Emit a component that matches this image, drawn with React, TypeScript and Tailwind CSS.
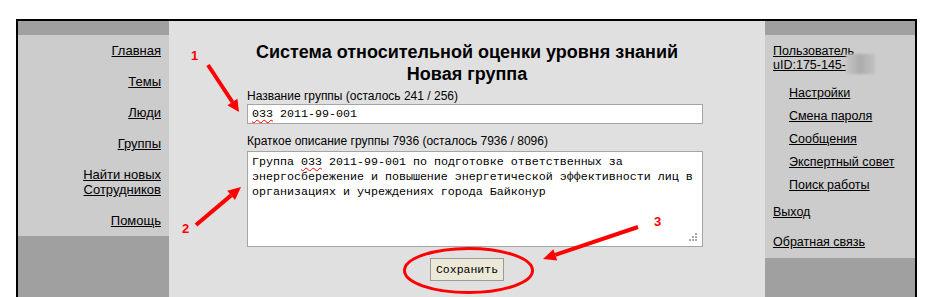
import React from "react";

const sans = { fontFamily: '"Liberation Sans", Arial, sans-serif' };
const mono = { fontFamily: '"Liberation Mono", "Courier New", monospace' };

function Wavy({ children }: { children: React.ReactNode }) {
  return (
    <span className="underline decoration-wavy decoration-[#ff0000] decoration-1 underline-offset-[2px]">
      {children}
    </span>
  );
}

export default function App() {
  const leftLinks: string[][] = [
    ["Главная"],
    ["Темы"],
    ["Люди"],
    ["Группы"],
    ["Найти новых", "Сотрудников"],
    ["Помощь"],
  ];
  const subLinks = ["Настройки", "Смена пароля", "Сообщения", "Экспертный совет", "Поиск работы"];

  return (
    <div className="relative w-[931px] h-[297px] overflow-hidden bg-white pl-[16px] pt-[19px] text-black" style={sans}>
      <div className="flex w-[901px] h-[278px] border-2 border-b-0 border-black">
        {/* left sidebar */}
        <div className="flex w-[151px] flex-col">
          <div className="h-[14px] bg-[#a0a0a0]" />
          <div className="h-[201px] bg-[#cccccc] pr-[8px] pt-[8px] text-right text-[13px]">
            {leftLinks.map((l) => (
              <div key={l[0]} className="mb-[16px] leading-[15px]">
                <a className="underline underline-offset-[1px] cursor-pointer">
                  {l.map((t, i) => (
                    <React.Fragment key={t}>
                      {i > 0 && <br />}
                      {t}
                    </React.Fragment>
                  ))}
                </a>
              </div>
            ))}
          </div>
          <div className="flex-1 bg-[#a0a0a0]" />
        </div>

        {/* center */}
        <div className="w-[596px] bg-[#e0e0e0] pt-[20px]">
          <h1 className="text-center text-[18px] font-bold leading-[22px]">
            Система относительной оценки уровня знаний
            <br />
            Новая группа
          </h1>
          <div className="ml-[78px] w-[456px]">
            <div className="mt-[4px] text-[12px] leading-[15px]">Название группы (осталось 241 / 256)</div>
            <div className="h-[20px] border border-[#a5a5a5] bg-white pl-[4px] text-[11.67px] leading-[18px]" style={mono}>
              <Wavy>033</Wavy> 2011-99-001
            </div>
            <div className="mt-[10px] text-[12px] leading-[15px]">
              Краткое описание группы 7936 (осталось 7936 / 8096)
            </div>
            <div
              className="relative mt-[2px] h-[96px] border border-[#a5a5a5] bg-white px-[4px] pt-[3px] text-[11.67px] leading-[15px]"
              style={mono}
            >
              <div className="whitespace-pre">
                Группа <Wavy>033</Wavy> 2011-99-001 по подготовке ответственных за
              </div>
              <div className="whitespace-pre">энергосбережение и повышение энергетической эффективности лиц в</div>
              <div className="whitespace-pre">организациях и учреждениях города Байконур</div>
              <svg className="absolute bottom-[5px] right-[5px]" width="10" height="10" viewBox="0 0 10 10">
                <rect x="8" y="2" width="2" height="2" fill="#a8a8a8" />
                <rect x="5" y="5" width="2" height="2" fill="#a8a8a8" />
                <rect x="8" y="5" width="2" height="2" fill="#a8a8a8" />
                <rect x="2" y="8" width="2" height="2" fill="#a8a8a8" />
                <rect x="5" y="8" width="2" height="2" fill="#a8a8a8" />
                <rect x="8" y="8" width="2" height="2" fill="#a8a8a8" />
              </svg>
            </div>
          </div>
          <div className="mt-[11px] flex justify-center">
            <button
              className="h-[23px] w-[74px] border border-[#9a9a9a] bg-[#ece9d8] text-[11.5px] leading-[21px]"
              style={mono}
            >
              Сохранить
            </button>
          </div>
        </div>

        {/* right sidebar */}
        <div className="flex w-[150px] flex-col">
          <div className="h-[14px] bg-[#a0a0a0]" />
          <div className="h-[223px] bg-[#cccccc] pl-[8px] pt-[9px] text-[12.5px] leading-[14px]">
            <a className="block underline underline-offset-[1px] cursor-pointer">
              Пользователь
              <br />
              <span className="relative">
                uID:175-145-
                <span className="absolute left-full top-[-4px] h-[20px] w-[29px] bg-gradient-to-r from-[#c6c6c6] via-[#acacac] to-[#c2c2c2] blur-[1px]" />
              </span>
            </a>
            <div className="mt-[14px] pl-[16px]">
              {subLinks.map((t, i) => (
                <div key={t} className={i > 0 ? "mt-[9px]" : ""}>
                  <a className="underline underline-offset-[1px] cursor-pointer">{t}</a>
                </div>
              ))}
            </div>
            <div className="mt-[13px]">
              <a className="underline underline-offset-[1px] cursor-pointer">Выход</a>
            </div>
            <div className="mt-[16px]">
              <a className="underline underline-offset-[1px] cursor-pointer">Обратная связь</a>
            </div>
          </div>
          <div className="flex-1 bg-[#a0a0a0]" />
        </div>
      </div>

      {/* annotations overlay */}
      <svg className="pointer-events-none absolute left-0 top-0" width="931" height="297" viewBox="0 0 931 297">
        <g stroke="#ff0000" strokeWidth="4" strokeLinecap="butt" fill="none">
          <line x1="208" y1="65" x2="232.4" y2="102" />
          <line x1="196" y1="225" x2="231.1" y2="195.4" />
          <line x1="638" y1="227" x2="555.3" y2="254.8" />
        </g>
        <g fill="#ff0000">
          <polygon points="239,112 227.4,105.3 237.4,98.7" />
          <polygon points="241,187 235,200 227.2,190.8" />
          <polygon points="543,259 553.4,249.2 557.2,260.5" />
        </g>
        <ellipse cx="468.5" cy="270.5" rx="64" ry="22" stroke="#ff0000" strokeWidth="3" fill="none" />
      </svg>
      <div className="absolute left-[191px] top-[49px] text-[13px] font-bold leading-[13px] text-[#ff0000]">1</div>
      <div className="absolute left-[182px] top-[222px] text-[13px] font-bold leading-[13px] text-[#ff0000]">2</div>
      <div className="absolute left-[654px] top-[215px] text-[13px] font-bold leading-[13px] text-[#ff0000]">3</div>
    </div>
  );
}
